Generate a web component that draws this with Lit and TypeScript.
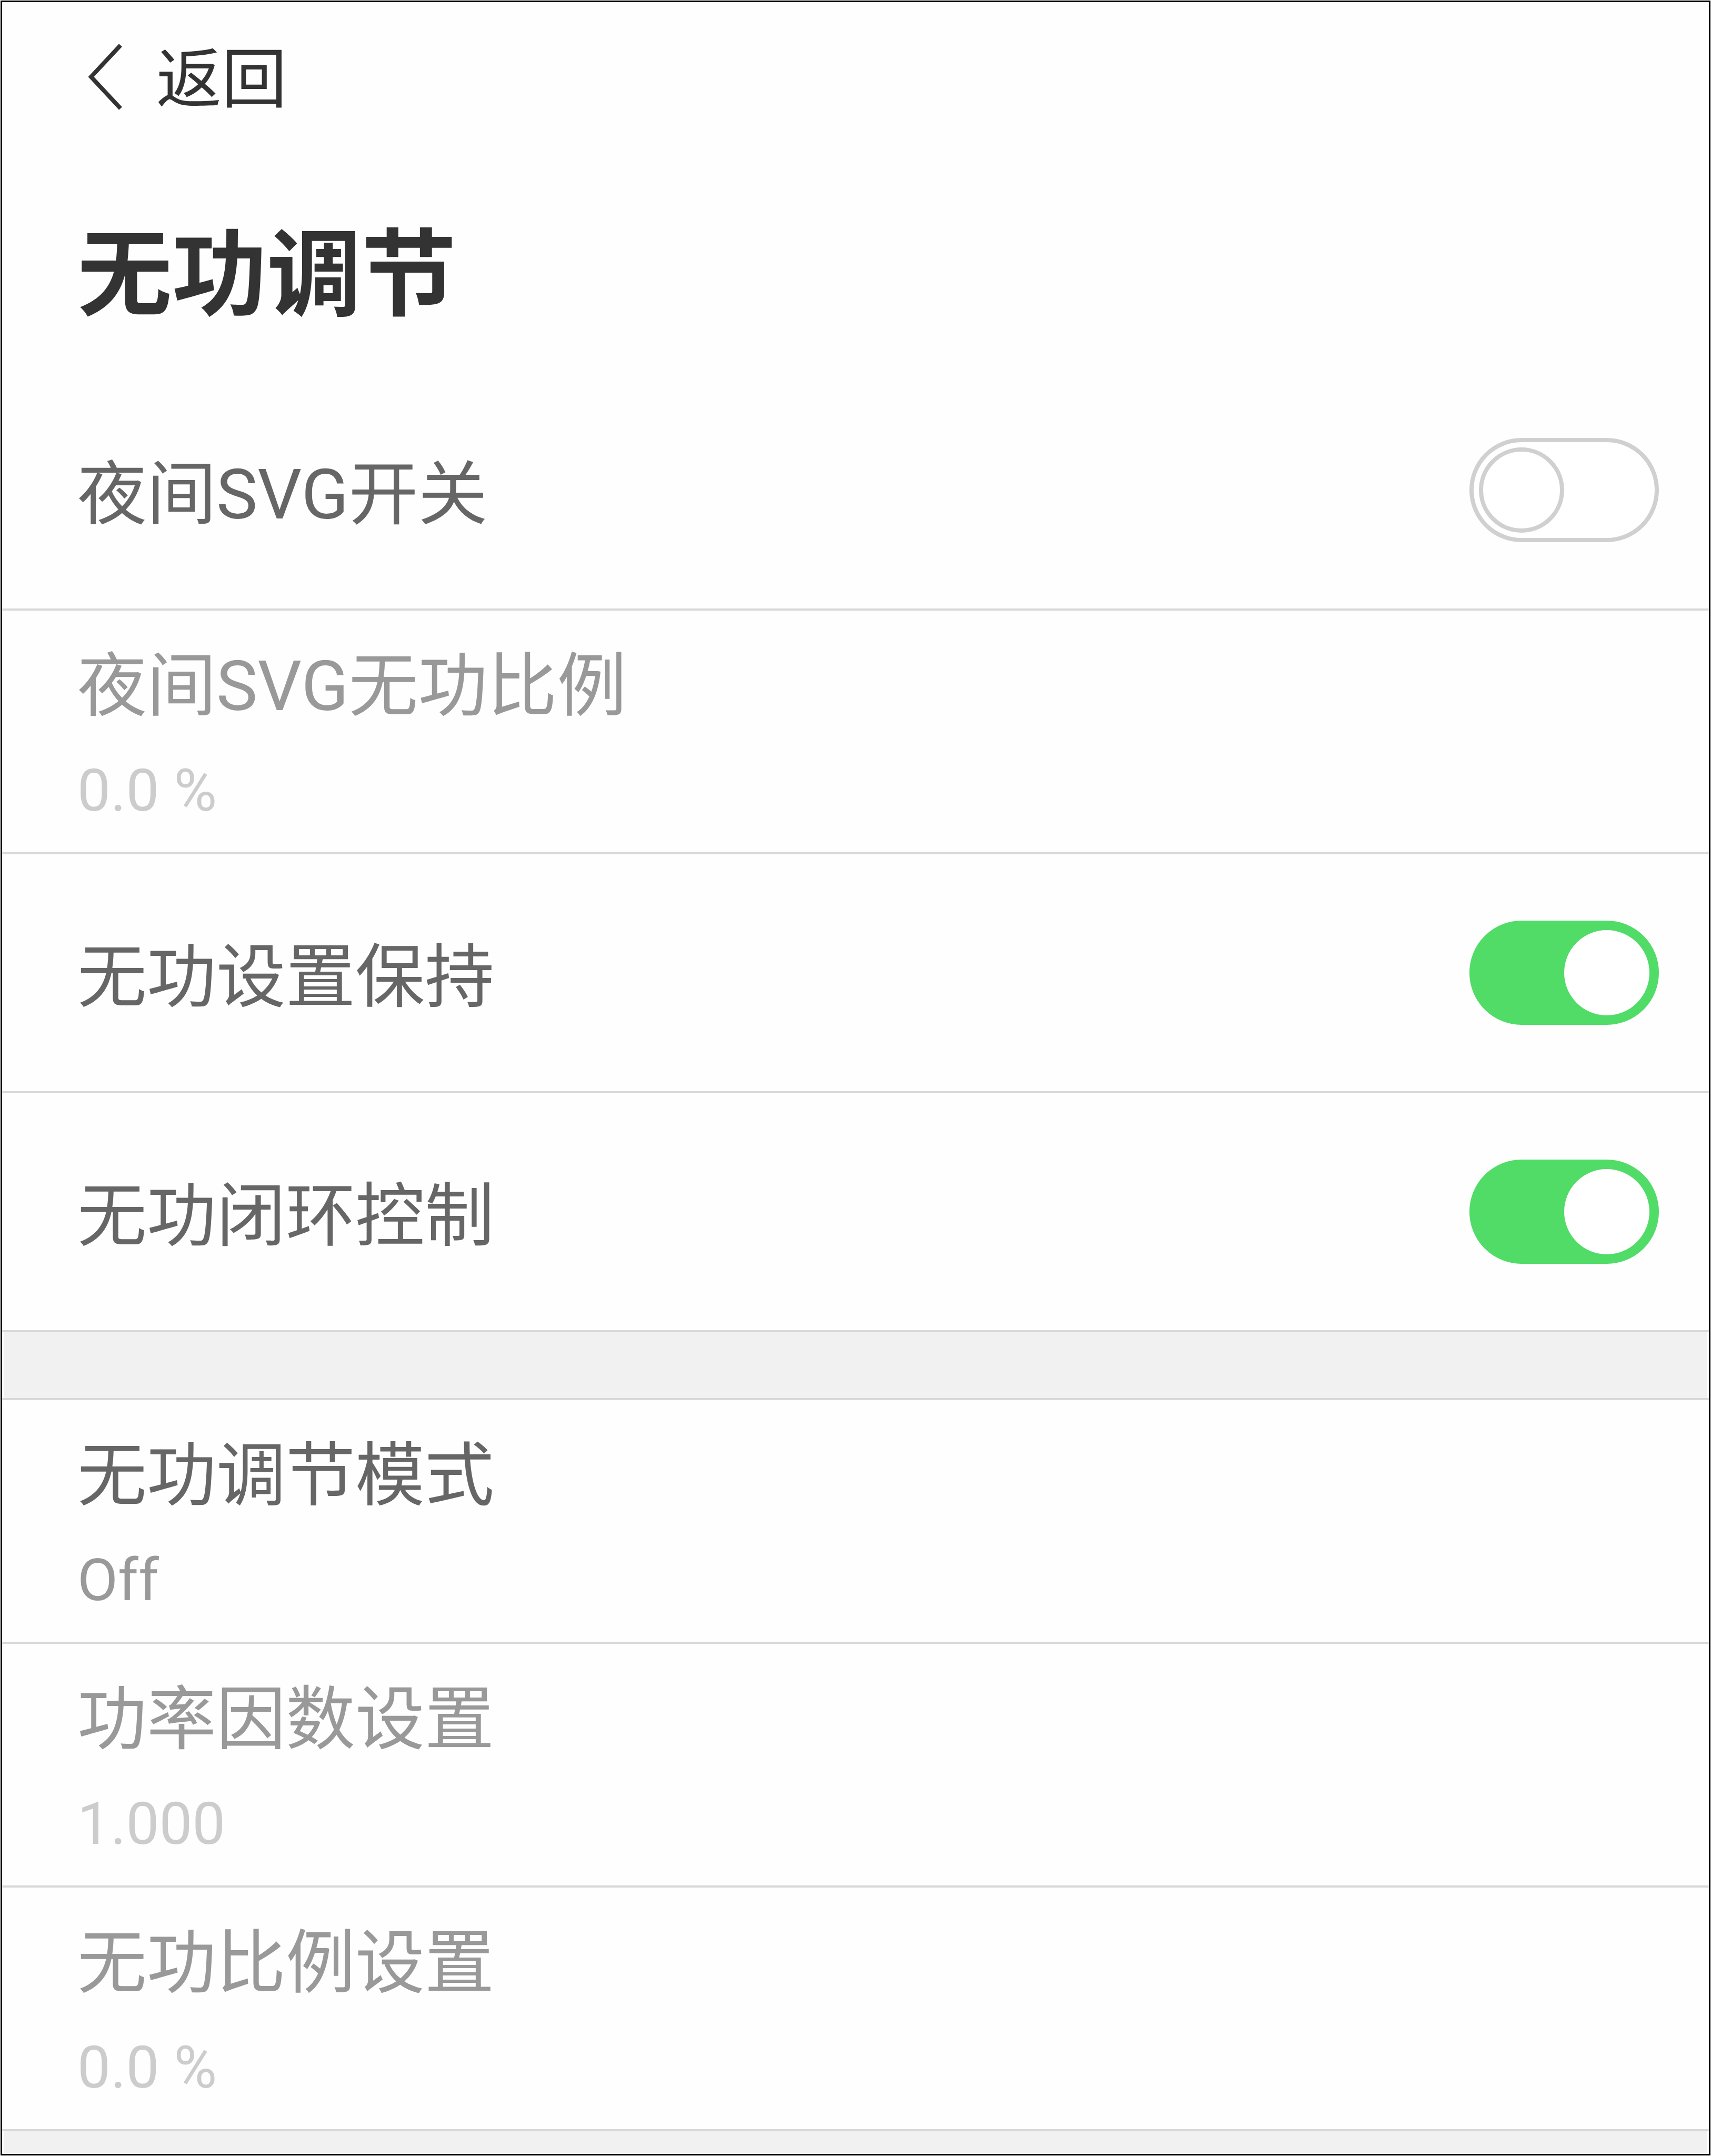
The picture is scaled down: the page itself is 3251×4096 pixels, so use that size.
import { LitElement, html, css } from "lit";
import { customElement, property, state } from "lit/decorators.js";

const FONT = css`Roboto, "Noto Sans CJK SC", sans-serif`;

@customElement("switch-row")
class SwitchRow extends LitElement {
  @property() label = "";
  @property({ type: Boolean }) checked = false;

  static styles = css`
    :host {
      display: block;
      border-bottom: 4px solid #d8d8d8;
    }
    .row {
      display: flex;
      align-items: center;
      justify-content: space-between;
      padding: 126px 95px 126px 143px;
      font-family: ${FONT};
      font-size: 132px;
      line-height: 180px;
      color: #666;
    }
    .text {
      padding-top: 18px;
    }
    .switch {
      appearance: none;
      flex: none;
      box-sizing: border-box;
      display: flex;
      align-items: center;
      width: 360px;
      height: 198px;
      margin: 0;
      padding: 0 10px;
      border: 8px solid #d0d0d0;
      border-radius: 99px;
      background: #fff;
    }
    .switch::before {
      content: "";
      box-sizing: border-box;
      width: 162px;
      height: 162px;
      border: 8px solid #d0d0d0;
      border-radius: 50%;
      background: #fff;
    }
    .switch:checked {
      justify-content: flex-end;
      border-color: #50dc67;
      background: #50dc67;
    }
    .switch:checked::before {
      border-color: #fff;
    }
  `;

  private toggle(e: Event) {
    this.checked = (e.target as HTMLInputElement).checked;
  }

  render() {
    return html`
      <div class="row">
        <label class="text" for="control">${this.label}</label>
        <input
          class="switch"
          id="control"
          type="checkbox"
          role="switch"
          .checked=${this.checked}
          @change=${this.toggle}
        />
      </div>
    `;
  }
}

@customElement("value-row")
class ValueRow extends LitElement {
  @property() label = "";
  @property() value = "";
  @property({ type: Boolean }) disabled = false;

  static styles = css`
    :host {
      display: block;
      border-bottom: 4px solid #d8d8d8;
    }
    .row {
      display: flex;
      flex-direction: column;
      align-items: flex-start;
      gap: 28px;
      width: 100%;
      margin: 0;
      padding: 54px 143px 37px;
      border: 0;
      background: none;
      font-family: ${FONT};
      text-align: left;
    }
    .label {
      font-size: 132px;
      line-height: 180px;
      color: #666;
    }
    .value {
      font-size: 112px;
      line-height: 160px;
      color: #999;
    }
    .row:disabled .label {
      color: #999;
    }
    .row:disabled .value {
      color: #ccc;
    }
  `;

  render() {
    return html`
      <button class="row" type="button" ?disabled=${this.disabled}>
        <span class="label">${this.label}</span>
        <span class="value">${this.value}</span>
      </button>
    `;
  }
}

@customElement("app-root")
class AppRoot extends LitElement {
  @state() private modes = [
    { label: "无功调节模式", value: "Off", disabled: false },
    { label: "功率因数设置", value: "1.000", disabled: true },
    { label: "无功比例设置", value: "0.0 %", disabled: true },
  ];

  static styles = css`
    :host {
      display: block;
      box-sizing: border-box;
      min-height: 100vh;
      padding: 1px;
      background: #fff;
    }
    .page {
      box-sizing: border-box;
      display: flex;
      flex-direction: column;
      min-height: calc(100vh - 2px);
      border: 3px solid #000;
      background: #fefefe;
      font-family: ${FONT};
      color: #333;
    }
    .header {
      padding: 58px 143px 62px;
    }
    .back {
      display: flex;
      align-items: center;
      gap: 64px;
      margin: 0;
      padding: 0 0 0 20px;
      border: 0;
      background: none;
      color: inherit;
      font-family: inherit;
      font-size: 124px;
      line-height: 180px;
    }
    .chevron {
      width: 66px;
      height: 126px;
      margin-bottom: 12px;
      fill: none;
      stroke: currentColor;
      stroke-width: 8;
    }
    .title {
      margin: 0;
      padding-top: 162px;
      font-size: 180px;
      line-height: 240px;
      font-weight: 700;
    }
    .divider {
      height: 125px;
      margin: 0 3px;
      background: #f1f1f1;
    }
    .group {
      border-top: 4px solid #d8d8d8;
    }
    .footer {
      flex: 1;
      margin: 0 3px;
      background: #f1f1f1;
    }
  `;

  render() {
    return html`
      <main class="page">
        <header class="header">
          <button class="back" type="button">
            <svg class="chevron" viewBox="0 0 66 126" aria-hidden="true">
              <path d="M62 3 L6 63 L62 123" />
            </svg>
            <span>返回</span>
          </button>
          <h1 class="title">无功调节</h1>
        </header>
        <section>
          <switch-row label="夜间SVG开关"></switch-row>
          <value-row label="夜间SVG无功比例" value="0.0 %" disabled></value-row>
          <switch-row label="无功设置保持" checked></switch-row>
          <switch-row label="无功闭环控制" checked></switch-row>
        </section>
        <div class="divider"></div>
        <section class="group">
          ${this.modes.map(
            (m) => html`<value-row
              .label=${m.label}
              .value=${m.value}
              .disabled=${m.disabled}
            ></value-row>`
          )}
        </section>
        <div class="footer"></div>
      </main>
    `;
  }
}
